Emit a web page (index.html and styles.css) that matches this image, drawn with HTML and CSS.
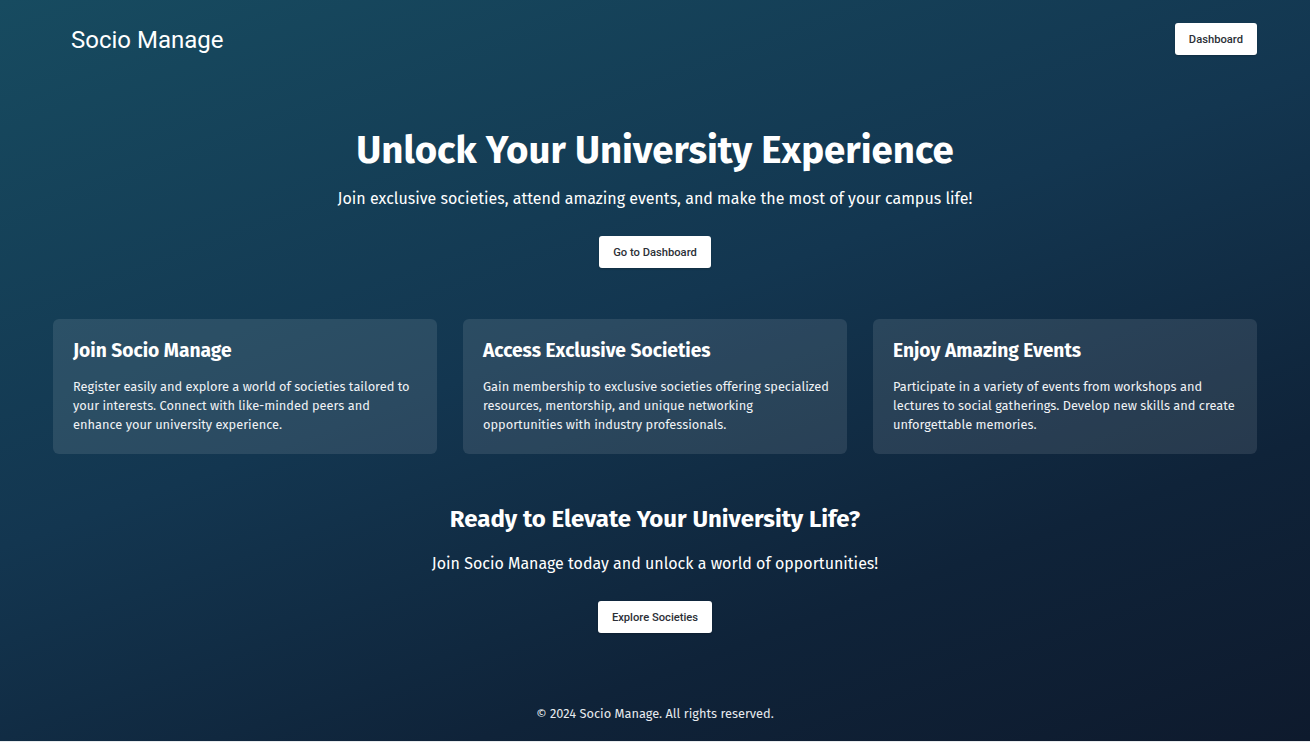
FILE: index.html
```html
<!DOCTYPE html>
<html lang="en">
<head>
<meta charset="utf-8">
<title>Socio Manage</title>
<link rel="stylesheet" href="styles.css">
</head>
<body>
<div class="page">
  <header class="topbar">
    <div class="logo">Socio Manage</div>
    <a class="btn" href="#">Dashboard</a>
  </header>
  <section class="hero">
    <h1 class="hero-title">Unlock Your University Experience</h1>
    <p class="hero-sub">Join exclusive societies, attend amazing events, and make the most of your campus life!</p>
    <a class="btn" href="#">Go to Dashboard</a>
  </section>
  <section class="cards">
    <div class="card">
      <h2 class="card-title">Join Socio Manage</h2>
      <p class="card-text">Register easily and explore a world of societies tailored to your interests. Connect with like-minded peers and enhance your university experience.</p>
    </div>
    <div class="card">
      <h2 class="card-title">Access Exclusive Societies</h2>
      <p class="card-text">Gain membership to exclusive societies offering specialized resources, mentorship, and unique networking opportunities with industry professionals.</p>
    </div>
    <div class="card">
      <h2 class="card-title">Enjoy Amazing Events</h2>
      <p class="card-text">Participate in a variety of events from workshops and lectures to social gatherings. Develop new skills and create unforgettable memories.</p>
    </div>
  </section>
  <section class="cta">
    <h2 class="cta-title">Ready to Elevate Your University Life?</h2>
    <p class="cta-sub">Join Socio Manage today and unlock a world of opportunities!</p>
    <a class="btn" href="#">Explore Societies</a>
  </section>
  <footer class="footer">© 2024 Socio Manage. All rights reserved.</footer>
</div>
</body>
</html>
```
FILE: styles.css
```css
* { box-sizing: border-box; }
html, body { margin: 0; padding: 0; background: #e9ecef; }
.page {
  height: 741px;
  background: linear-gradient(160deg, #174b60 0%, #133650 45%, #0f2339 75%, #0e1a2d 100%);
  color: #fff;
  font-family: "Fira Sans", "Noto Sans", sans-serif;
  display: flex;
  flex-direction: column;
  align-items: center;
  overflow: hidden;
}
.topbar {
  width: 100%;
  display: flex;
  justify-content: space-between;
  align-items: center;
  padding: 23px 53px 0 71px;
  height: 55px;
}
.logo {
  font-family: Roboto, sans-serif;
  font-size: 24px;
  font-weight: 400;
  line-height: 32px;
  padding-top: 2px;
  color: #fff;
}
.btn {
  display: inline-flex;
  align-items: center;
  justify-content: center;
  height: 32px;
  padding: 0 14px;
  background: #fff;
  color: #2b2f36;
  border-radius: 3px;
  font-family: Roboto, sans-serif;
  font-size: 11.2px;
  font-weight: 500;
  text-decoration: none;
  box-shadow: 0 1px 2px rgba(0,0,0,0.2);
}
.hero {
  display: flex;
  flex-direction: column;
  align-items: center;
  margin-top: 72px;
}
.hero-title {
  margin: 0;
  font-size: 38.4px;
  font-weight: 700;
  line-height: 46px;
}
.hero-sub {
  margin: 14px 0 25px;
  font-size: 16px;
  line-height: 24px;
}
.cards {
  width: 1204px;
  display: grid;
  grid-template-columns: repeat(3, 1fr);
  gap: 26px;
  margin-top: 51px;
}
.card {
  background: rgba(255,255,255,0.1);
  border-radius: 6px;
  padding: 19px 17px 20px 20px;
  height: 135px;
}
.card-title {
  margin: 0 0 13px;
  font-size: 19.2px;
  font-weight: 700;
  line-height: 26px;
}
.card-text {
  margin: 0;
  font-size: 12.8px;
  line-height: 19px;
  color: #f0f3f6;
}
.cta {
  display: flex;
  flex-direction: column;
  align-items: center;
  margin-top: 50px;
}
.cta-title {
  margin: 0;
  font-size: 24px;
  font-weight: 700;
  line-height: 30px;
}
.cta-sub {
  margin: 18px 0 25px;
  font-size: 16px;
  line-height: 24px;
}
.footer {
  margin-top: auto;
  margin-bottom: 20px;
  font-size: 12.8px;
  color: #e6eaee;
}
```
